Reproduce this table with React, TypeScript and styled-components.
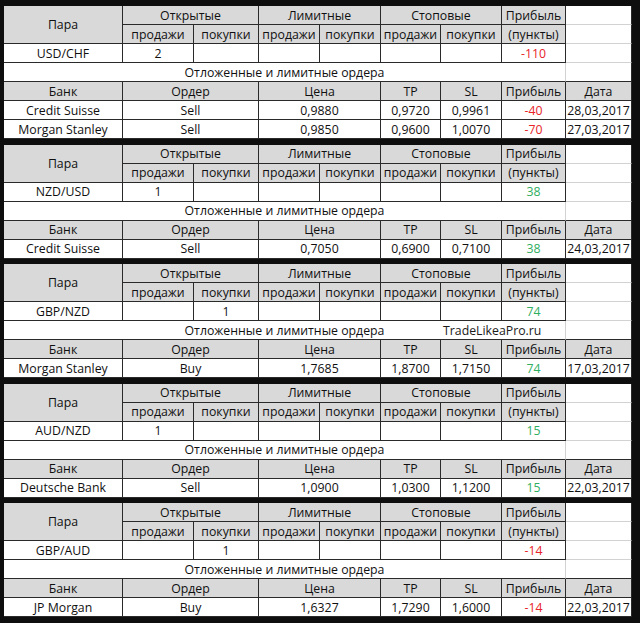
import React from "react";
import styled, { createGlobalStyle } from "styled-components";

const Global = createGlobalStyle`
  * { box-sizing: border-box; }
  html, body { margin: 0; padding: 0; background: #0e0e0e; }
`;

const Page = styled.div`
  width: 640px;
  height: 623px;
  padding: 6px 8px 0 4px;
  display: flex;
  flex-direction: column;
  gap: 5.5px;
  background: #0e0e0e;
  font-family: "Open Sans", "Liberation Sans", Arial, sans-serif;
  font-size: 12.3px;
  font-weight: 500;
  color: #101010;
`;

const Block = styled.div`
  display: grid;
  grid-template-columns: 119px 71px 65px 61px 61px 60px 61px 64px 66px;
  grid-auto-rows: 19px;
`;

const DARK = "#2a2a2a";
const LIGHT = "#d2d2d2";

const Cell = styled.div<{
  $head?: boolean;
  $span?: number;
  $rows?: number;
  $softRight?: boolean;
  $softBottom?: boolean;
}>`
  position: relative;
  grid-column: span ${(p) => p.$span ?? 1};
  grid-row: span ${(p) => p.$rows ?? 1};
  background: ${(p) => (p.$head ? "#d9d9d9" : "#ffffff")};
  border-right: 1px solid ${(p) => (p.$softRight ? LIGHT : DARK)};
  border-bottom: 1px solid ${(p) => (p.$softBottom ? LIGHT : DARK)};
  display: flex;
  align-items: center;
  justify-content: center;
  white-space: nowrap;
  line-height: 1;
  padding-top: 2px;
`;

const Profit = styled.span<{ $neg: boolean }>`
  color: ${(p) => (p.$neg ? "#e8232a" : "#2fae5f")};
`;

const Watermark = styled.span`
  position: absolute;
  left: 439px;
  top: 50%;
  transform: translateY(-40%);
  color: #1a1a1a;
`;

type Order = {
  bank: string;
  side: string;
  price: string;
  tp: string;
  sl: string;
  profit: number;
  date: string;
};

type Section = {
  pair: string;
  openSell?: string;
  openBuy?: string;
  profit: number;
  orders: Order[];
  watermark?: boolean;
};

const sections: Section[] = [
  {
    pair: "USD/CHF",
    openSell: "2",
    profit: -110,
    orders: [
      { bank: "Credit Suisse", side: "Sell", price: "0,9880", tp: "0,9720", sl: "0,9961", profit: -40, date: "28,03,2017" },
      { bank: "Morgan Stanley", side: "Sell", price: "0,9850", tp: "0,9600", sl: "1,0070", profit: -70, date: "27,03,2017" },
    ],
  },
  {
    pair: "NZD/USD",
    openSell: "1",
    profit: 38,
    orders: [
      { bank: "Credit Suisse", side: "Sell", price: "0,7050", tp: "0,6900", sl: "0,7100", profit: 38, date: "24,03,2017" },
    ],
  },
  {
    pair: "GBP/NZD",
    openBuy: "1",
    profit: 74,
    watermark: true,
    orders: [
      { bank: "Morgan Stanley", side: "Buy", price: "1,7685", tp: "1,8700", sl: "1,7150", profit: 74, date: "17,03,2017" },
    ],
  },
  {
    pair: "AUD/NZD",
    openSell: "1",
    profit: 15,
    orders: [
      { bank: "Deutsche Bank", side: "Sell", price: "1,0900", tp: "1,0300", sl: "1,1200", profit: 15, date: "22,03,2017" },
    ],
  },
  {
    pair: "GBP/AUD",
    openBuy: "1",
    profit: -14,
    orders: [
      { bank: "JP Morgan", side: "Buy", price: "1,6327", tp: "1,7290", sl: "1,6000", profit: -14, date: "22,03,2017" },
    ],
  },
];

const ProfitValue = ({ v }: { v: number }) => <Profit $neg={v < 0}>{v}</Profit>;

const SectionBlock = ({ s }: { s: Section }) => (
  <Block>
    <Cell $head $rows={2}>Пара</Cell>
    <Cell $head $span={2}>Открытые</Cell>
    <Cell $head $span={2}>Лимитные</Cell>
    <Cell $head $span={2}>Стоповые</Cell>
    <Cell $head>Прибыль</Cell>
    <Cell $softBottom />

    <Cell $head>продажи</Cell>
    <Cell $head>покупки</Cell>
    <Cell $head>продажи</Cell>
    <Cell $head>покупки</Cell>
    <Cell $head>продажи</Cell>
    <Cell $head>покупки</Cell>
    <Cell $head>(пункты)</Cell>
    <Cell $softBottom />

    <Cell>{s.pair}</Cell>
    <Cell>{s.openSell ?? ""}</Cell>
    <Cell>{s.openBuy ?? ""}</Cell>
    <Cell />
    <Cell />
    <Cell />
    <Cell />
    <Cell>
      <ProfitValue v={s.profit} />
    </Cell>
    <Cell $softBottom />

    <Cell $span={8} $softRight>
      Отложенные и лимитные ордера
      {s.watermark && <Watermark>TradeLikeaPro.ru</Watermark>}
    </Cell>
    <Cell />

    <Cell $head>Банк</Cell>
    <Cell $head $span={2}>Ордер</Cell>
    <Cell $head $span={2}>Цена</Cell>
    <Cell $head>TP</Cell>
    <Cell $head>SL</Cell>
    <Cell $head>Прибыль</Cell>
    <Cell $head>Дата</Cell>

    {s.orders.map((o) => (
      <React.Fragment key={o.bank + o.date}>
        <Cell>{o.bank}</Cell>
        <Cell $span={2}>{o.side}</Cell>
        <Cell $span={2}>{o.price}</Cell>
        <Cell>{o.tp}</Cell>
        <Cell>{o.sl}</Cell>
        <Cell>
          <ProfitValue v={o.profit} />
        </Cell>
        <Cell>{o.date}</Cell>
      </React.Fragment>
    ))}
  </Block>
);

export default function App() {
  return (
    <>
      <Global />
      <Page>
        {sections.map((s) => (
          <SectionBlock key={s.pair} s={s} />
        ))}
      </Page>
    </>
  );
}
